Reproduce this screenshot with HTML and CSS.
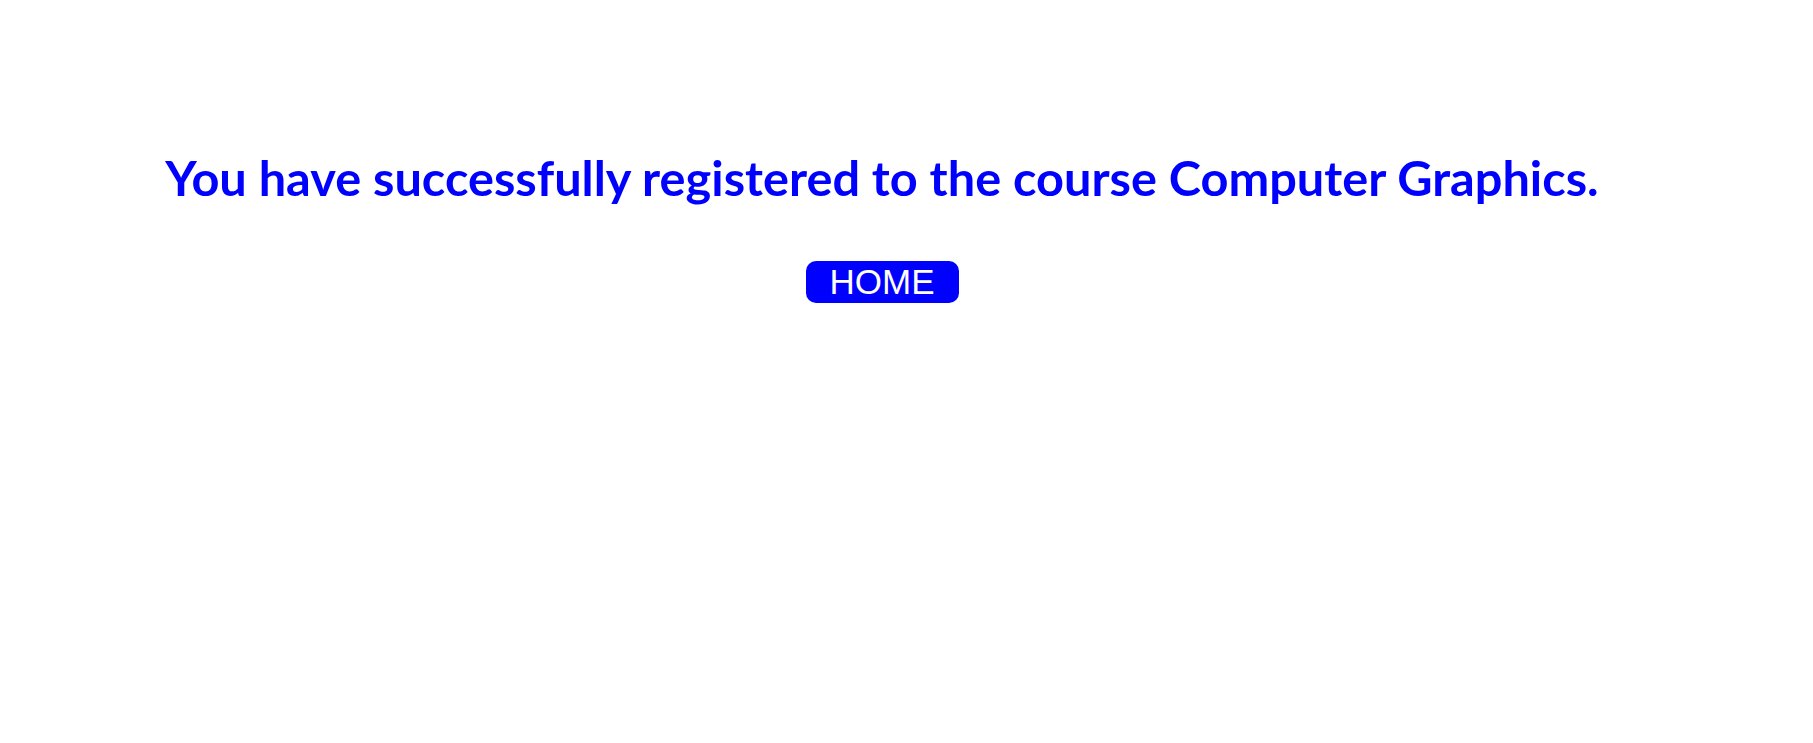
FILE: index.html
```html
<!DOCTYPE html>
<html>
<head>
<meta charset="utf-8">
<link rel="stylesheet" href="styles.css">
</head>
<body>
<div class="wrap">
  <h1 class="msg">You have successfully registered to the course Computer Graphics.</h1>
  <a class="home" href="#">HOME</a>
</div>
</body>
</html>
```
FILE: styles.css
```css
html, body { margin: 0; padding: 0; background: #fff; }
.wrap {
  width: 1764px;
  text-align: center;
  padding-top: 149px;
}
.msg {
  margin: 0;
  font-family: Lato, "Open Sans", sans-serif;
  font-weight: 700;
  font-size: 48.7px;
  line-height: 56px;
  color: #0000ff;
}
.home {
  display: inline-block;
  margin-top: 56px;
  background: #0000ff;
  color: #fff;
  text-decoration: none;
  font-family: "Liberation Sans", Arial, sans-serif;
  font-size: 35px;
  line-height: 42px;
  padding: 0 24px;
  border-radius: 10px;
}
```
